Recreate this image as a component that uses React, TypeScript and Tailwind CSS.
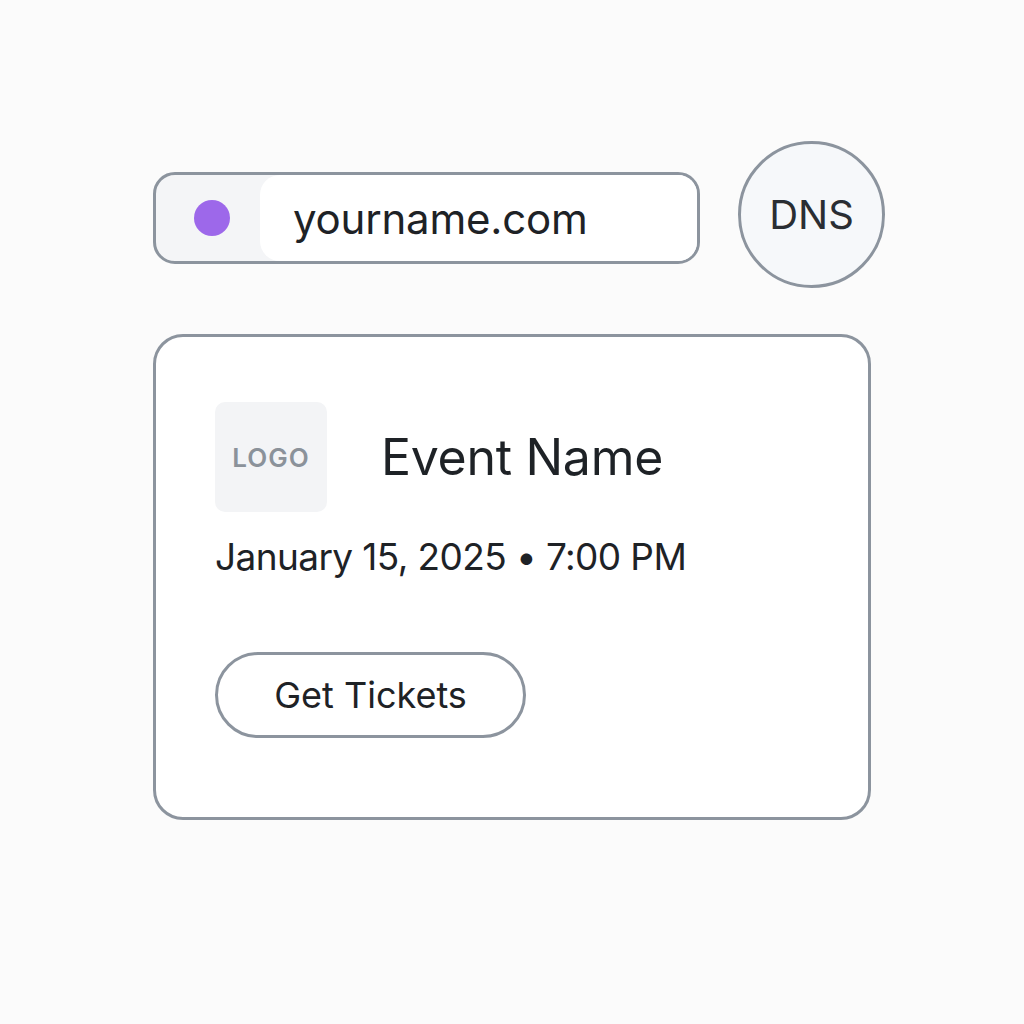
import React from "react";

export default function App() {
  return (
    <div
      className="w-[1024px] h-[1024px] bg-[#fbfbfb] relative"
      style={{ fontFamily: "Inter, 'Noto Sans', sans-serif" }}
    >
      <div className="pt-[141px] pl-[153px]">
        <div className="flex items-start gap-[38px]">
          <div className="mt-[31px] w-[547px] h-[92px] rounded-[22px] border-[3px] border-[#8c949e] bg-[#f4f5f7] flex overflow-hidden">
            <div className="w-[104px] flex items-center pl-[38px]">
              <div className="w-[36px] h-[36px] rounded-full bg-[#9d68ea]" />
            </div>
            <div className="flex-1 bg-white rounded-l-[20px] flex items-center pl-[33px] text-[42px] text-[#1e2226] tracking-[-0.2px]">
              yourname.com
            </div>
          </div>
          <div className="w-[147px] h-[147px] rounded-full border-[3px] border-[#8c949e] bg-[#f6f8fa] flex items-center justify-center text-[40px] text-[#2a2e33]">
            DNS
          </div>
        </div>

        <div className="mt-[46px] w-[718px] h-[486px] rounded-[30px] border-[3px] border-[#8c949e] bg-white pl-[59px] pt-[65px]">
          <div className="flex items-center">
            <div className="w-[112px] h-[110px] rounded-[10px] bg-[#f3f4f6] flex items-center justify-center text-[26px] font-semibold tracking-[1px] text-[#8b929a]">
              LOGO
            </div>
            <div className="ml-[54px] text-[50px] text-[#1e2226] tracking-[-0.3px]">
              Event Name
            </div>
          </div>
          <div className="mt-[20px] text-[37px] text-[#1e2226] tracking-[-0.6px] leading-[50px]">
            January 15, 2025 • 7:00 PM
          </div>
          <div className="mt-[70px] w-[311px] h-[86px] rounded-full border-[3px] border-[#8c949e] bg-white flex items-center justify-center text-[36px] text-[#1e2226]">
            Get Tickets
          </div>
        </div>
      </div>
    </div>
  );
}
